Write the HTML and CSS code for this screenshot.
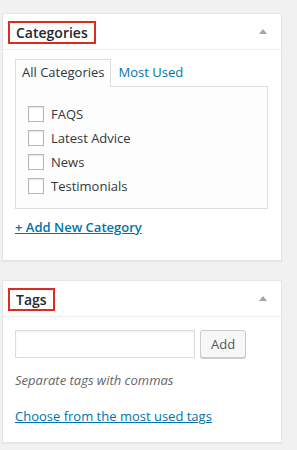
FILE: index.html
```html
<!DOCTYPE html>
<html lang="en">
<head>
    <meta charset="UTF-8">
    <title>Categories and Tags</title>
    <link rel="stylesheet" href="styles.css">
</head>
<body>

    <div class="postbox">
        <div class="box-header">
            <h2 class="box-title"><span class="marked">Categories</span></h2>
            <span class="toggle-arrow"></span>
        </div>
        <div class="inside cat-inside">
            <ul class="cat-tabs">
                <li class="tab active">All Categories</li>
                <li class="tab"><a href="#">Most Used</a></li>
            </ul>
            <div class="tab-panel">
                <ul class="cat-list">
                    <li><label><input type="checkbox"> FAQS</label></li>
                    <li><label><input type="checkbox"> Latest Advice</label></li>
                    <li><label><input type="checkbox"> News</label></li>
                    <li><label><input type="checkbox"> Testimonials</label></li>
                </ul>
            </div>
            <p class="add-row"><a href="#" class="add-category">+ Add New Category</a></p>
        </div>
    </div>

    <div class="postbox">
        <div class="box-header">
            <h2 class="box-title"><span class="marked">Tags</span></h2>
            <span class="toggle-arrow"></span>
        </div>
        <div class="inside tag-inside">
            <div class="tag-row">
                <input type="text" class="tag-input">
                <button class="button">Add</button>
            </div>
            <p class="howto">Separate tags with commas</p>
            <p class="cloud-row"><a href="#" class="tag-cloud-link">Choose from the most used tags</a></p>
        </div>
    </div>

</body>
</html>
```

FILE: styles.css
```css
body {
    font-family: 'Open Sans', sans-serif;
    font-size: 13px;
    line-height: 18px;
    color: #444;
    background-color: #f1f1f1;
    margin: 0;
    padding: 13px 0 0 2px;
}

p {
    margin: 0;
}

.postbox {
    width: 278px;
    background-color: #fff;
    border: 1px solid #e5e5e5;
    box-shadow: 0 1px 1px rgba(0, 0, 0, 0.04);
    margin-bottom: 19px;
}

.box-header {
    display: flex;
    align-items: center;
    justify-content: space-between;
    height: 35px;
    border-bottom: 1px solid #eee;
    padding: 0 14px 0 5px;
}

.box-title {
    margin: 0;
    font-size: 14px;
    font-weight: 600;
    line-height: 19px;
    color: #23282d;
}

.marked {
    display: inline-block;
    border: 2px solid #dc2b1f;
    padding: 0 6px;
    margin-top: 2px;
}

.toggle-arrow {
    width: 0;
    height: 0;
    border-left: 4px solid transparent;
    border-right: 4px solid transparent;
    border-bottom: 5px solid #a0a5aa;
}

.inside {
    padding: 0 12px;
}

.cat-inside {
    padding-top: 9px;
    padding-bottom: 24px;
}

.tag-inside {
    padding-top: 13px;
    padding-bottom: 17px;
}

.cat-tabs {
    list-style: none;
    display: flex;
    margin: 0;
    padding: 0;
}

.tab {
    height: 20px;
    padding: 3px 6px 4px;
    border: 1px solid transparent;
    border-bottom: none;
    margin-bottom: -1px;
}

.tab.active {
    border-color: #ddd;
    background-color: #fdfdfd;
    color: #32373c;
    position: relative;
}

.tab a {
    color: #0073aa;
    text-decoration: none;
}

.tab-panel {
    width: 251px;
    height: 121px;
    border: 1px solid #ddd;
    background-color: #fdfdfd;
}

.cat-list {
    list-style: none;
    margin: 0;
    padding: 15px 0 0 12px;
}

.cat-list li {
    height: 24px;
    line-height: 24px;
    color: #32373c;
}

.cat-list label {
    display: flex;
    align-items: center;
    height: 24px;
}

.cat-list input {
    appearance: none;
    width: 16px;
    height: 16px;
    margin: 0 7px 0 0;
    border: 1px solid #b4b9be;
    background-color: #fff;
    box-shadow: inset 0 1px 2px rgba(0, 0, 0, 0.1);
}

.add-row {
    margin-top: 9px;
}

.add-category {
    font-weight: 600;
    color: #0073aa;
    text-decoration: underline;
}

.tag-row {
    display: flex;
    align-items: flex-start;
    gap: 5px;
    height: 28px;
}

.tag-input {
    width: 180px;
    height: 28px;
    box-sizing: border-box;
    border: 1px solid #ddd;
    box-shadow: inset 0 1px 2px rgba(0, 0, 0, 0.07);
    margin: 0;
}

.button {
    height: 28px;
    box-sizing: border-box;
    padding: 0 10px;
    font-family: 'Open Sans', sans-serif;
    font-size: 13px;
    color: #555;
    background-color: #f7f7f7;
    border: 1px solid #ccc;
    border-radius: 3px;
    box-shadow: 0 1px 0 #ccc;
}

.howto {
    margin-top: 13px;
    font-style: italic;
    color: #666;
}

.cloud-row {
    margin-top: 18px;
}

.tag-cloud-link {
    color: #0073aa;
    text-decoration: underline;
}
```
